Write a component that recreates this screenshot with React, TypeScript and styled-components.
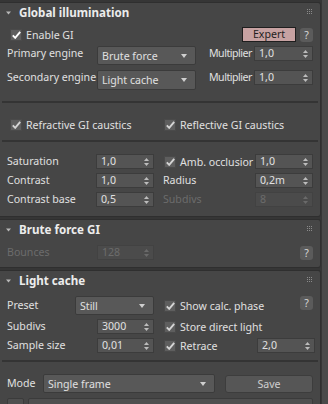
import React from "react";
import styled, { createGlobalStyle } from "styled-components";

const FONT = `"Noto Sans", "Open Sans", "Liberation Sans", sans-serif`;

const Global = createGlobalStyle`
  html, body { margin: 0; padding: 0; background: #393939; }
  * { box-sizing: border-box; }
`;

const Root = styled.div`
  width: 328px;
  height: 404px;
  overflow: hidden;
  display: flex;
  background: #363636;
  font-family: ${FONT};
  font-size: 10.6px;
  color: #e0e0e0;
`;

const Column = styled.div`
  width: 321px;
  flex: none;
  display: flex;
  flex-direction: column;
  gap: 2px;
  padding-top: 2px;
`;

const Strip = styled.div`
  width: 6px;
  margin-left: 1px;
  background: #4a4a4a;
`;

const Panel = styled.section<{ $pb: number }>`
  background: #464646;
  border: 1px solid #2f2f2f;
  border-left: none;
  border-radius: 0 3px 3px 0;
  padding: 0 7px ${(p) => p.$pb}px 7px;
  flex: none;
`;

const Header = styled.div`
  height: 19px;
  display: flex;
  align-items: center;
  margin: 0 1px 0 -1px;
`;

const Caret = styled.svg`
  width: 5px;
  height: 4px;
  margin-right: 8px;
  flex: none;
`;

const Title = styled.div`
  font-weight: 700;
  font-size: 11.6px;
  color: #ececec;
  flex: 1;
`;

const Grip = styled.svg`
  width: 5px;
  height: 5px;
  align-self: flex-start;
  margin-top: 6px;
`;

const Row = styled.div<{ $top: number; $h: number; $cols: string }>`
  margin-top: ${(p) => p.$top}px;
  height: ${(p) => p.$h}px;
  display: grid;
  grid-template-columns: ${(p) => p.$cols};
  align-items: center;
`;

const FlexRow = styled.div<{ $top: number; $h: number }>`
  margin-top: ${(p) => p.$top}px;
  height: ${(p) => p.$h}px;
  display: flex;
  align-items: center;
  gap: 4px;
`;

const Label = styled.div<{ $dim?: boolean; $start?: boolean; $pad?: number; $tight?: boolean }>`
  line-height: 15px;
  white-space: nowrap;
  align-self: ${(p) => (p.$start ? "start" : "center")};
  padding-left: ${(p) => p.$pad ?? 0}px;
  letter-spacing: ${(p) => (p.$tight ? "-0.5px" : "0")};
  color: ${(p) => (p.$dim ? "#6c6c6c" : "#e0e0e0")};
`;

const Divider = styled.div<{ $top: number }>`
  margin: ${(p) => p.$top}px -5px 0 -5px;
  height: 2px;
  background: #343434;
`;

const SpinBox = styled.div<{ $dim?: boolean; $start?: boolean; $shift?: number }>`
  height: 15px;
  align-self: ${(p) => (p.$start ? "start" : "center")};
  margin-left: ${(p) => p.$shift ?? 0}px;
  margin-right: ${(p) => -(p.$shift ?? 0)}px;
  background: ${(p) => (p.$dim ? "#4b4b4b" : "#545454")};
  border: 1px solid ${(p) => (p.$dim ? "#424242" : "#3c3c3c")};
  display: flex;
  align-items: center;
  justify-content: space-between;
  padding: 0 4px 0 4px;
  color: ${(p) => (p.$dim ? "#6c6c6c" : "#e0e0e0")};
  line-height: 13px;
`;

const Arrows = styled.svg`
  width: 5px;
  height: 8px;
  flex: none;
`;

const DropBox = styled.div<{ $h: number }>`
  height: ${(p) => p.$h}px;
  background: #585858;
  border: 1px solid #3b3b3b;
  border-radius: 2px;
  display: flex;
  align-items: center;
  justify-content: space-between;
  padding: 0 8px 0 4px;
  color: #e0e0e0;
`;

const DropArrow = styled.svg`
  width: 6px;
  height: 4px;
  flex: none;
`;

const CheckWrap = styled.div<{ $pad?: number }>`
  display: flex;
  align-items: center;
  gap: 4px;
  padding-left: ${(p) => p.$pad ?? 0}px;
  white-space: nowrap;
  min-width: 0;
`;

const Box = styled.div<{ $bright?: boolean }>`
  width: 12px;
  height: 12px;
  flex: none;
  background: #5e5e5e;
  border: 1px solid #4a4a4a;
  display: flex;
  align-items: center;
  justify-content: center;
  color: ${(p) => (p.$bright ? "#ffffff" : "#d4d4d4")};
`;

const Help = styled.div<{ $start?: boolean }>`
  width: 13px;
  height: 14px;
  align-self: ${(p) => (p.$start ? "start" : "center")};
  justify-self: end;
  background: #5b5b5b;
  border-radius: 3px;
  display: flex;
  align-items: center;
  justify-content: center;
  color: #d8d8d8;
  font-size: 10.5px;
`;

const Expert = styled.div`
  margin-left: auto;
  width: 54px;
  height: 15px;
  background: #c7a2a2;
  border: 1px solid #1e1e1e;
  color: #1e1e1e;
  display: flex;
  align-items: center;
  justify-content: center;
  line-height: 13px;
`;

const SaveBtn = styled.div`
  margin-left: 10px;
  height: 18px;
  background: #565656;
  border: 1px solid #3d3d3d;
  border-radius: 3px;
  display: flex;
  align-items: center;
  justify-content: center;
  color: #cfcfcf;
`;

const Stub = styled.div<{ $w?: number }>`
  height: 18px;
  width: ${(p) => (p.$w ? `${p.$w}px` : "auto")};
  flex: ${(p) => (p.$w ? "none" : "1")};
  background: #4f4f4f;
  border: 1px solid #3b3b3b;
  border-radius: 2px;
`;

function CaretIcon() {
  return (
    <Caret viewBox="0 0 5 4">
      <path d="M0 0.5 H5 L2.5 3.5 Z" fill="#b8b8b8" />
    </Caret>
  );
}

function GripIcon() {
  const dots = [];
  for (let r = 0; r < 3; r++)
    for (let c = 0; c < 3; c++)
      dots.push(<rect key={`${r}${c}`} x={c * 2} y={r * 2} width="1" height="1" fill="#8a8a8a" />);
  return <Grip viewBox="0 0 5 5">{dots}</Grip>;
}

function PanelHeader({ title }: { title: string }) {
  return (
    <Header>
      <CaretIcon />
      <Title>{title}</Title>
      <GripIcon />
    </Header>
  );
}

function Spinner({ value, dim, start, shift }: { value: string; dim?: boolean; start?: boolean; shift?: number }) {
  const c = dim ? "#6a6a6a" : "#bdbdbd";
  return (
    <SpinBox $dim={dim} $start={start} $shift={shift}>
      <span>{value}</span>
      <Arrows viewBox="0 0 5 8">
        <path d="M0 3 L2.5 0 L5 3 Z" fill={c} />
        <path d="M0 5 L2.5 8 L5 5 Z" fill={c} />
      </Arrows>
    </SpinBox>
  );
}

function Dropdown({ value, h }: { value: string; h: number }) {
  return (
    <DropBox $h={h}>
      <span>{value}</span>
      <DropArrow viewBox="0 0 6 4">
        <path d="M0 0 H6 L3 4 Z" fill="#cfcfcf" />
      </DropArrow>
    </DropBox>
  );
}

function Check({ label, bright, pad }: { label: string; bright?: boolean; pad?: number }) {
  return (
    <CheckWrap $pad={pad}>
      <Box $bright={bright}>
        <svg width="9" height="8" viewBox="0 0 9 8">
          <path d="M0.8 4.3 L3.2 6.8 L8.2 0.8" stroke="currentColor" strokeWidth="1.9" fill="none" />
        </svg>
      </Box>
      <span>{label}</span>
    </CheckWrap>
  );
}

export default function App() {
  return (
    <>
      <Global />
      <Root>
        <Column>
          <Panel $pb={9}>
            <PanelHeader title="Global illumination" />
            <FlexRow $top={5} $h={15}>
              <Check label="Enable GI" bright pad={3} />
              <Expert>Expert</Expert>
              <Help>?</Help>
            </FlexRow>
            <Row $top={4} $h={19} $cols="90px 99px 13px 45px 59px">
              <Label $start>Primary engine</Label>
              <Dropdown value="Brute force" h={19} />
              <span />
              <Label $start $tight>Multiplier</Label>
              <Spinner value="1,0" start />
            </Row>
            <Row $top={5} $h={20} $cols="90px 99px 13px 45px 59px">
              <Label $start>Secondary engine</Label>
              <Dropdown value="Light cache" h={20} />
              <span />
              <Label $start $tight>Multiplier</Label>
              <Spinner value="1,0" start />
            </Row>
            <Divider $top={11} />
            <Row $top={15} $h={12} $cols="157px 1fr">
              <Check label="Refractive GI caustics" pad={3} />
              <Check label="Reflective GI caustics" />
            </Row>
            <Divider $top={10} />
            <Row $top={12} $h={15} $cols="89px 58px 1fr 58px">
              <Label>Saturation</Label>
              <Spinner value="1,0" />
              <Check label="Amb. occlusior" pad={10} />
              <Spinner value="1,0" />
            </Row>
            <Row $top={4} $h={15} $cols="89px 58px 1fr 58px">
              <Label>Contrast</Label>
              <Spinner value="1,0" />
              <Label $pad={9}>Radius</Label>
              <Spinner value="0,2m" />
            </Row>
            <Row $top={4} $h={15} $cols="89px 58px 1fr 58px">
              <Label>Contrast base</Label>
              <Spinner value="0,5" />
              <Label $pad={9} $dim>Subdivs</Label>
              <Spinner value="8" dim />
            </Row>
          </Panel>

          <Panel $pb={7}>
            <PanelHeader title="Brute force GI" />
            <Row $top={6} $h={15} $cols="90px 57px 1fr">
              <Label $dim>Bounces</Label>
              <Spinner value="128" dim />
              <Help>?</Help>
            </Row>
          </Panel>

          <Panel $pb={0}>
            <PanelHeader title="Light cache" />
            <Row $top={6} $h={19} $cols="68px 79px 1fr 14px">
              <Label>Preset</Label>
              <Dropdown value="Still" h={19} />
              <Check label="Show calc. phase" pad={10} />
              <Help $start>?</Help>
            </Row>
            <Row $top={4} $h={15} $cols="90px 57px 1fr 58px">
              <Label>Subdivs</Label>
              <Spinner value="3000" />
              <Check label="Store direct light" pad={10} />
              <span />
            </Row>
            <Row $top={4} $h={15} $cols="90px 57px 1fr 58px">
              <Label>Sample size</Label>
              <Spinner value="0,01" />
              <Check label="Retrace" pad={10} />
              <Spinner value="2,0" shift={2} />
            </Row>
            <Divider $top={7} />
            <Row $top={12} $h={19} $cols="36px 172px 1fr">
              <Label>Mode</Label>
              <Dropdown value="Single frame" h={19} />
              <SaveBtn>Save</SaveBtn>
            </Row>
            <FlexRow $top={5} $h={18}>
              <Stub $w={17} />
              <Stub />
            </FlexRow>
          </Panel>
        </Column>
        <Strip />
      </Root>
    </>
  );
}
